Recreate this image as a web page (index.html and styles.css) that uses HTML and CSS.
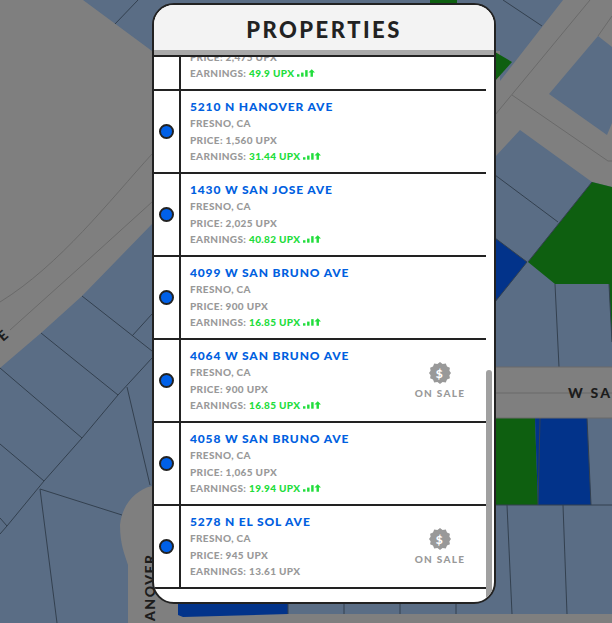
FILE: index.html

```html
<!DOCTYPE HTML>
<html>
<head>
<meta name="viewport" content="width=device-width, initial-scale=1">
<link rel="stylesheet" href="styles.css">
</head>
    <body>
        <!-- the map behind the panel -->
        <svg class="map" viewBox="0 0 612 623" width="612" height="623">
            <rect width="612" height="623" fill="#7f7f7f"/>
            <path class="lot" d="M83,0 L152,51 L500,51 L500,81 L563,0 Z"/>
            <path class="lot" d="M0,368 L41,333 L82,296 L152,224 L495,157 L520,130 L592,182 L612,187 L612,614 L128,614 L128,623 L0,623 Z"/>
            <path class="lot" d="M549,94 L598,36 L612,47 L612,123 L607,135 Z"/>
            <path class="road" d="M128,623 L128,565 C125,555 120,545 120,525 C122,505 135,490 152,486 L178,486 L178,623 Z"/>
            <rect class="road" x="495" y="367" width="117" height="51"/>
            <rect class="road" x="150" y="614" width="462" height="9"/>
            <path class="green" d="M592,182 L612,187 L612,342 L609,284 L555,284 L528,262 Z"/>
            <path class="green" d="M495,52 L512,62 L495,81 Z"/>
            <path class="green" d="M430,0 L457,0 L457,4 L430,4 Z"/>
            <path class="green" d="M495,418 L535,418 L538,505 L495,505 Z"/>
            <path class="blue" d="M495,238 L527,262 L495,302 Z"/>
            <path class="blue" d="M535,418 L587,418 L591,505 L538,505 Z"/>
            <path class="blue" d="M178,604 L288,604 L288,614 L183,617 L178,615 Z"/>
            <g class="lines">
                <path d="M115,24 L138,0 M503,0 L542,26"/>
                <path d="M82,296 L152,351 M41,333 L118,395 M0,368 L82,438 M0,444 L44,481 M132,336 L152,314"/>
                <path d="M152,358 L118,395 L82,438 L44,481 L7,526 L0,534 M0,518 L7,526"/>
                <path d="M40,489 L122,515 M40,489 L57,623 M127,387 L150,485"/>
                <path d="M495,175 L558,222 M592,182 L528,262 M527,262 L495,302 M495,238 L527,262"/>
                <path d="M555,284 L559,367 M609,284 L612,342 M495,505 L612,505 M507,505 L512,614 M563,505 L567,614"/>
                <path d="M540,418 L538,505 M587,418 L591,505"/>
                <path d="M288,604 L288,614 M344,604 L344,614 M400,604 L400,614 M456,604 L456,614"/>
            </g>
            <g class="roadlines">
                <path d="M0,302 C60,265 110,200 152,154"/>
                <path d="M10,330 L88,260 L152,202"/>
                <path d="M495,115 L590,0 M512,95 L608,161 L612,161 M598,36 L612,16 M495,393 L612,393"/>
                <path d="M495,367 L612,367 M495,418 L612,418"/>
            </g>
            <text class="street" transform="translate(3,342) rotate(-41)">E</text>
            <text class="street wide" x="568" y="398">W SA</text>
            <text class="street" transform="translate(155,621) rotate(-90)">ANOVER</text>
        </svg>

        <svg class="defs" width="0" height="0">
            <symbol id="trend" viewBox="0 0 22 9">
                <rect x="0" y="6" width="3" height="3"/>
                <rect x="5" y="4" width="3" height="5"/>
                <rect x="10" y="1" width="3" height="8"/>
                <path d="M18,0 L22,4 L19.5,4 L19.5,9 L16.5,9 L16.5,4 L14,4 Z"/>
            </symbol>
            <symbol id="badge" viewBox="0 0 22 22">
                <path d="M11,0 L13.6,1.9 L16.8,1.4 L18,4.4 L20.9,5.7 L20.4,8.8 L22,11 L20.4,13.2 L20.9,16.3 L18,17.6 L16.8,20.6 L13.6,20.1 L11,22 L8.4,20.1 L5.2,20.6 L4,17.6 L1.1,16.3 L1.6,13.2 L0,11 L1.6,8.8 L1.1,5.7 L4,4.4 L5.2,1.4 L8.4,1.9 Z"/>
                <text x="11" y="15.5" text-anchor="middle" class="dollar">$</text>
            </symbol>
        </svg>

        <div class="panel">
            <div class="panel_head">PROPERTIES</div>
            <div class="list">
                <div class="row first">
                    <div class="dot_cell"><span class="dot"></span></div>
                    <div class="info">
                        <h2>2475 W SAN BRUNO AVE</h2>
                        <p>FRESNO, CA</p>
                        <p>PRICE: 2,475 UPX</p>
                        <p>EARNINGS: <span class="earn">49.9 UPX</span> <svg class="trend"><use href="#trend"/></svg></p>
                    </div>
                </div>
                <div class="row">
                    <div class="dot_cell"><span class="dot"></span></div>
                    <div class="info">
                        <h2>5210 N HANOVER AVE</h2>
                        <p>FRESNO, CA</p>
                        <p>PRICE: 1,560 UPX</p>
                        <p>EARNINGS: <span class="earn">31.44 UPX</span> <svg class="trend"><use href="#trend"/></svg></p>
                    </div>
                </div>
                <div class="row">
                    <div class="dot_cell"><span class="dot"></span></div>
                    <div class="info">
                        <h2>1430 W SAN JOSE AVE</h2>
                        <p>FRESNO, CA</p>
                        <p>PRICE: 2,025 UPX</p>
                        <p>EARNINGS: <span class="earn">40.82 UPX</span> <svg class="trend"><use href="#trend"/></svg></p>
                    </div>
                </div>
                <div class="row">
                    <div class="dot_cell"><span class="dot"></span></div>
                    <div class="info">
                        <h2>4099 W SAN BRUNO AVE</h2>
                        <p>FRESNO, CA</p>
                        <p>PRICE: 900 UPX</p>
                        <p>EARNINGS: <span class="earn">16.85 UPX</span> <svg class="trend"><use href="#trend"/></svg></p>
                    </div>
                </div>
                <div class="row">
                    <div class="dot_cell"><span class="dot"></span></div>
                    <div class="info">
                        <h2>4064 W SAN BRUNO AVE</h2>
                        <p>FRESNO, CA</p>
                        <p>PRICE: 900 UPX</p>
                        <p>EARNINGS: <span class="earn">16.85 UPX</span> <svg class="trend"><use href="#trend"/></svg></p>
                    </div>
                    <div class="sale"><svg class="badge"><use href="#badge"/></svg><span>ON SALE</span></div>
                </div>
                <div class="row">
                    <div class="dot_cell"><span class="dot"></span></div>
                    <div class="info">
                        <h2>4058 W SAN BRUNO AVE</h2>
                        <p>FRESNO, CA</p>
                        <p>PRICE: 1,065 UPX</p>
                        <p>EARNINGS: <span class="earn">19.94 UPX</span> <svg class="trend"><use href="#trend"/></svg></p>
                    </div>
                </div>
                <div class="row">
                    <div class="dot_cell"><span class="dot"></span></div>
                    <div class="info">
                        <h2>5278 N EL SOL AVE</h2>
                        <p>FRESNO, CA</p>
                        <p>PRICE: 945 UPX</p>
                        <p>EARNINGS: 13.61 UPX</p>
                    </div>
                    <div class="sale"><svg class="badge"><use href="#badge"/></svg><span>ON SALE</span></div>
                </div>
            </div>
            <div class="scroll_thumb"></div>
        </div>
    </body>
</html>
```

FILE: styles.css

```css
* {
    box-sizing: border-box;
}
body {
    margin: 0;
    width: 612px;
    height: 623px;
    overflow: hidden;
    background-color: #7f7f7f;
    font-family: Lato, "Open Sans", sans-serif;
}
/* The map fills the window, everything else lies on top */
.map {
    position: absolute;
    top: 0;
    left: 0;
}
.defs {
    position: absolute;
}
.lot {
    fill: #5a6d85;
}
.road {
    fill: #7f7f7f;
}
.green {
    fill: #0e5f10;
}
.blue {
    fill: #02338a;
}
.lines path {
    fill: none;
    stroke: #33404f;
    stroke-width: 1;
}
.roadlines path {
    fill: none;
    stroke: #6a6a6a;
    stroke-width: 1;
}
.street {
    font-size: 14px;
    font-weight: 900;
    letter-spacing: 1.5px;
    fill: #1c1c1c;
}
.street.wide {
    letter-spacing: 2.2px;
}
/* The panel */
.panel {
    position: relative;
    width: 344px;
    height: 601px;
    margin: 3px 0 0 152px;
    background-color: white;
    border: 2px solid #222;
    border-radius: 22px;
    overflow: hidden;
}
.panel_head {
    height: 52px;
    padding-top: 10px;
    text-align: center;
    font-size: 22px;
    line-height: 30px;
    font-weight: 900;
    letter-spacing: 2.5px;
    color: #222;
    background-color: #f3f3f3;
    border-bottom: 2px solid #222;
    box-shadow: inset 0 -5px 0 #a9a9a9;
}
.list {
    height: 543px;
    overflow: hidden;
}
.row {
    display: flex;
    width: 332px;
    height: 83px;
    border-bottom: 2px solid #222;
}
.row.first {
    margin-top: -49px;
}
.dot_cell {
    display: flex;
    align-items: center;
    justify-content: center;
    width: 27px;
    margin-bottom: -2px;
    padding: 0 1px 3px 0;
    border-right: 2px solid #222;
}
.dot {
    width: 15px;
    height: 15px;
    background-color: #0060e8;
    border: 2px solid #222;
    border-radius: 50%;
}
.info {
    flex: 1;
    padding: 8px 0 0 9px;
}
.info h2 {
    margin: 0;
    font-size: 12px;
    line-height: 16px;
    font-weight: 900;
    letter-spacing: 0.85px;
    color: #0060e0;
}
.info p {
    margin: 0;
    font-size: 10px;
    line-height: 16.5px;
    font-weight: 900;
    letter-spacing: 0.35px;
    color: #999;
}
.earn {
    color: #22dd3c;
}
.trend {
    width: 18px;
    height: 8px;
    fill: #22dd3c;
}
/* On sale mark at the right of a row */
.sale {
    display: flex;
    flex-direction: column;
    align-items: center;
    width: 52px;
    margin: 22px 20px 0 0;
    font-size: 10px;
    font-weight: 900;
    letter-spacing: 1.3px;
    color: #999;
}
.badge {
    width: 22px;
    height: 22px;
    margin-bottom: 3px;
    fill: #999;
}
.dollar {
    font-size: 12px;
    font-weight: 900;
    fill: white;
}
.scroll_thumb {
    position: absolute;
    top: 365px;
    right: 2px;
    width: 6px;
    height: 230px;
    background-color: #a0a0a0;
    border-radius: 3px;
}
```
